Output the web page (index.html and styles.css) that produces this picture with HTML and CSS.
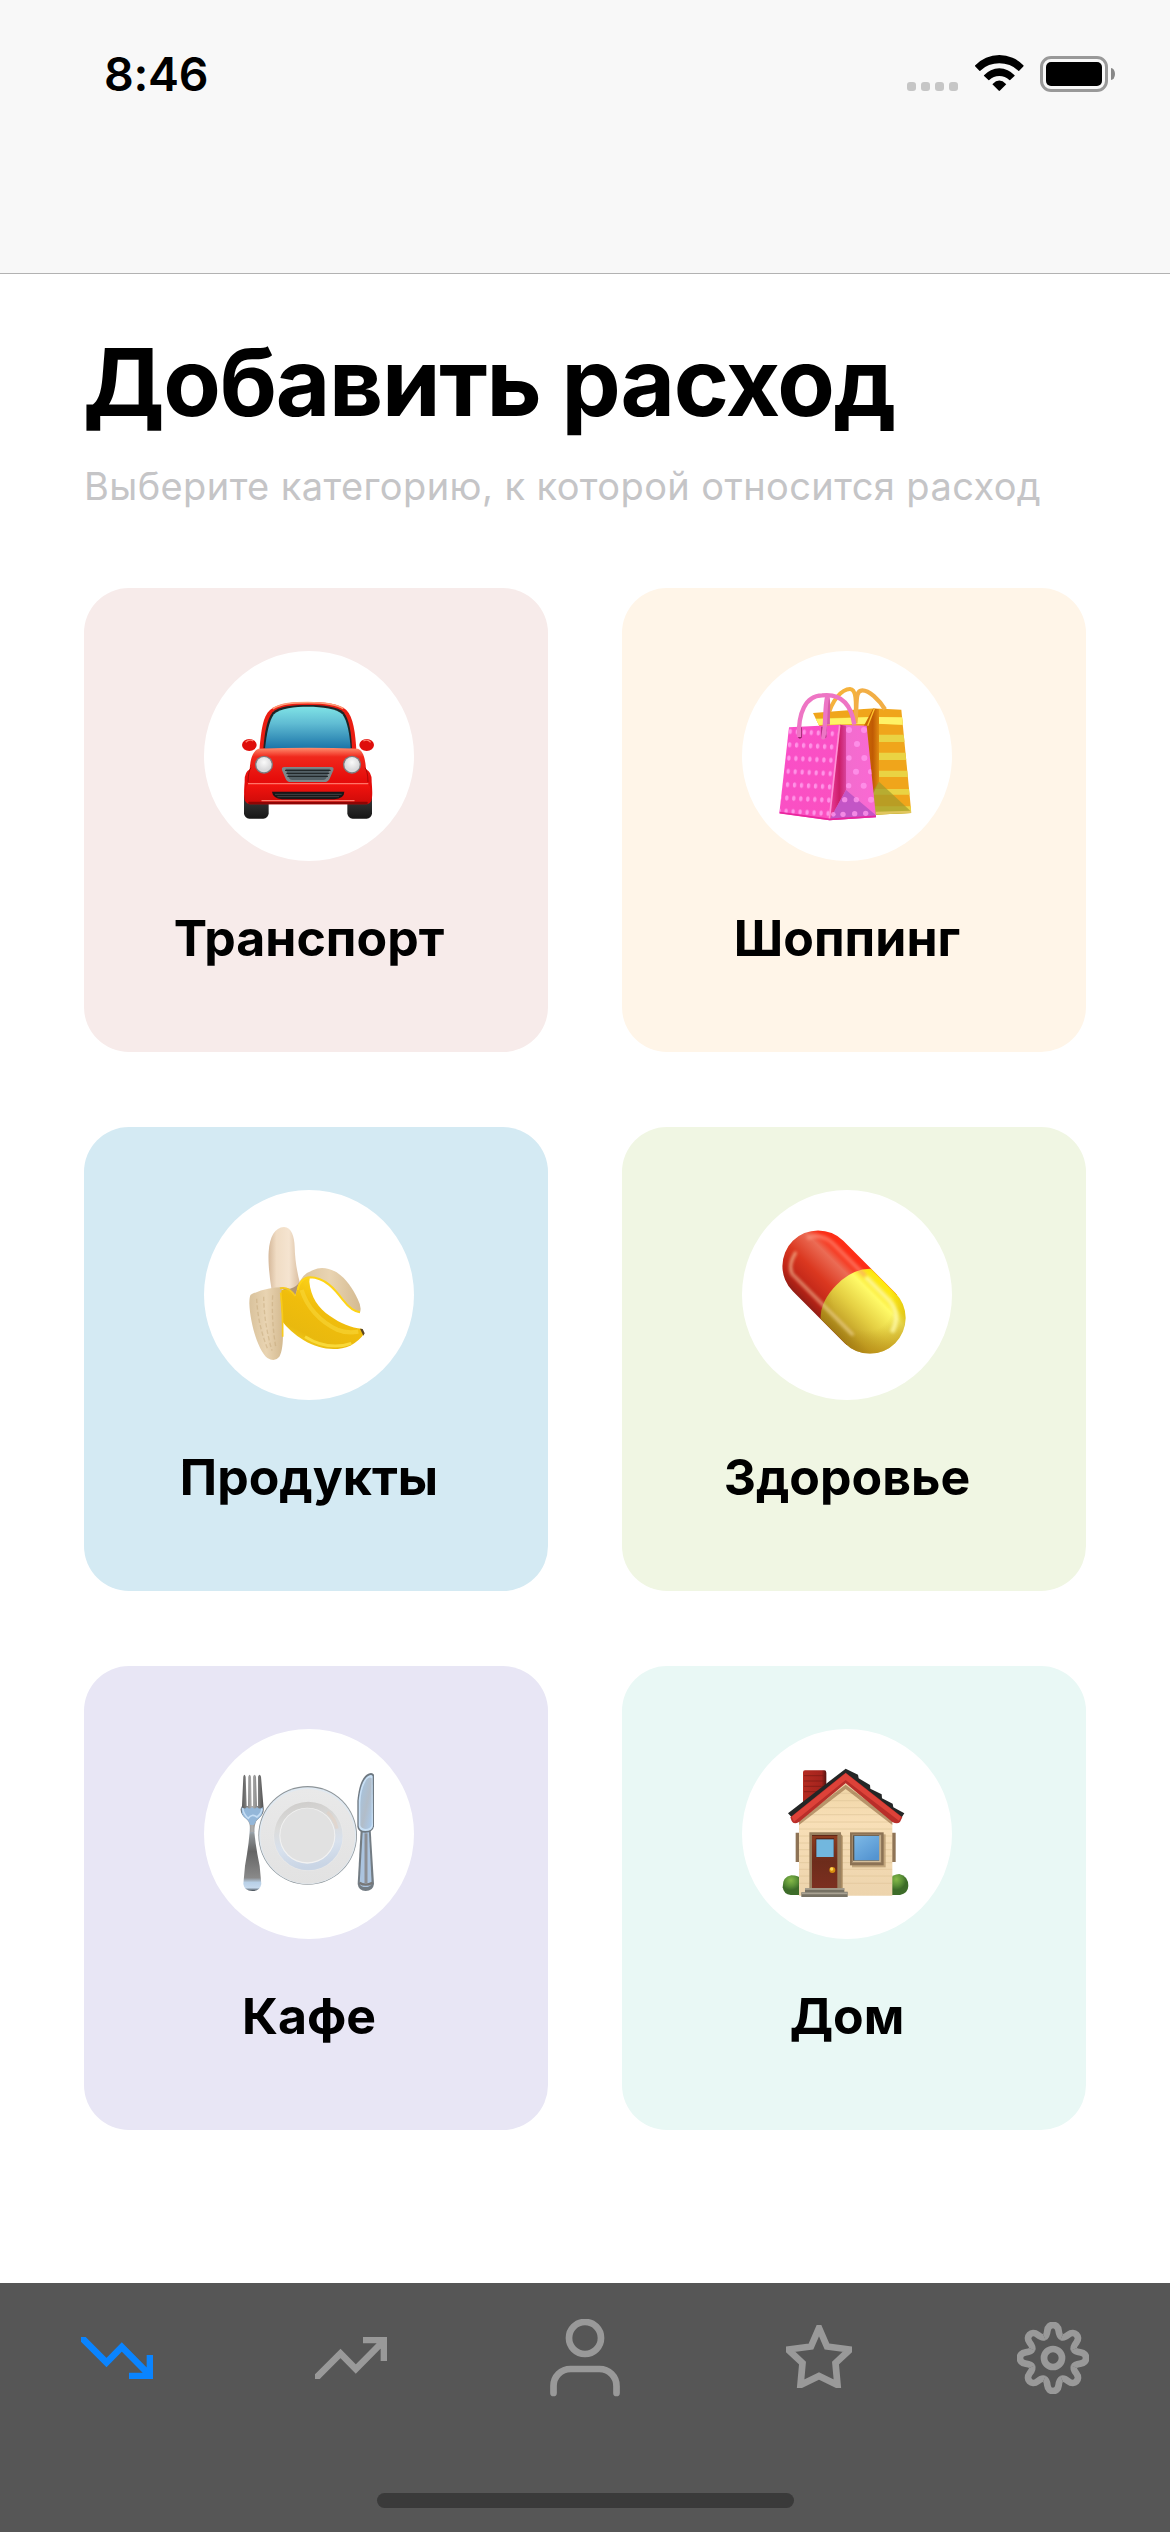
FILE: index.html
```html
<!DOCTYPE html>
<html lang="ru">
<head>
<meta charset="utf-8">
<meta name="viewport" content="width=device-width, initial-scale=1">
<title>Добавить расход</title>
<link rel="stylesheet" href="styles.css">
</head>
<body>
<div class="screen">
  <header class="navbar">
    <div class="status">
      <span class="clock">8:46</span>
      <div class="indicators">
        <div class="signal"><i></i><i></i><i></i><i></i></div>
        <svg class="wifi" viewBox="0 0 49 36">
          <path d="M0 10.6A33.4 33.4 0 0 1 48.6 10.6Q48.8 11 48.3 11.6L44.2 15.8Q43.8 16 43.3 15.7A27.7 27.7 0 0 0 5.3 15.7Q4.8 16 4.4 15.8L.3 11.6Q-.2 11 0 10.6Z"/>
          <path d="M9 20.2A20.5 20.5 0 0 1 39.6 20.2Q39.9 20.6 39.5 21L35.2 25.1Q34.8 25.4 34.3 25.1A14.5 14.5 0 0 0 14.3 25.1Q13.8 25.4 13.4 25.1L9.1 21Q8.7 20.6 9 20.2Z"/>
          <path d="M17.6 28.9Q24.3 22.2 31 28.9Q31.3 29.3 31 29.6L25 35.6Q24.3 36.3 23.6 35.6L17.6 29.6Q17.3 29.3 17.6 28.9Z"/>
        </svg>
        <div class="battery"><div class="battery-body"><div class="battery-level"></div></div><div class="battery-cap"></div></div>
      </div>
    </div>
  </header>

  <main class="content">
    <h1 class="title">Добавить расход</h1>
    <p class="subtitle">Выберите категорию, к которой относится расход</p>

    <div class="grid">
      <section class="card card-transport">
        <div class="badge">
          <svg viewBox="42 33 630 630">
            <defs>
              <linearGradient id="carGlass" x1="0" y1="0" x2="0" y2="1"><stop offset="0" stop-color="#7fe3e6"/><stop offset=".4" stop-color="#60bcd3"/><stop offset="1" stop-color="#1b74a8"/></linearGradient>
              <linearGradient id="carBody" x1="0" y1="0" x2="0" y2="1"><stop offset="0" stop-color="#ff8d6e"/><stop offset=".16" stop-color="#f0281c"/><stop offset=".55" stop-color="#e60d0b"/><stop offset="1" stop-color="#d90806"/></linearGradient>
              <linearGradient id="carTire" x1="0" y1="0" x2="0" y2="1"><stop offset="0" stop-color="#444"/><stop offset="1" stop-color="#161616"/></linearGradient>
              <linearGradient id="carBumper" x1="0" y1="0" x2="0" y2="1"><stop offset="0" stop-color="#f5140f"/><stop offset="1" stop-color="#cf0b09"/></linearGradient>
              <radialGradient id="carLamp" cx=".5" cy=".35"><stop offset="0" stop-color="#fafafa"/><stop offset="1" stop-color="#d9d9db"/></radialGradient>
            </defs>
            <rect x="162" y="455" width="74" height="81" rx="16" fill="url(#carTire)"/>
            <rect x="472" y="455" width="74" height="81" rx="16" fill="url(#carTire)"/>
            <path d="M208 330C214 270 218 230 240 210C262 190 310 186 354 186C398 186 448 190 469 210C490 230 496 280 499 330Z" fill="#ea1d12"/>
            <path d="M248 206C275 190 310 188 354 188C398 188 435 190 460 206" fill="none" stroke="#ff9b78" stroke-width="5"/>
            <path d="M220 325C224 280 230 238 248 217C266 198 310 195 354 195C398 195 444 199 461 217C478 238 484 280 486 325Z" fill="#1d2426"/>
            <path d="M225 326C230 282 237 243 252 223C270 204 315 200 354 200C396 200 442 206 457 223C472 243 479 282 482 326Z" fill="url(#carGlass)"/>
            <ellipse cx="178" cy="315" rx="22" ry="18" fill="#df0e0b"/><ellipse cx="530" cy="315" rx="22" ry="18" fill="#df0e0b"/>
            <path d="M167 307Q178 296 190 303M520 303Q532 296 542 307" fill="none" stroke="#ff7b69" stroke-width="4"/>
            <path d="M205 326Q354 321 504 326C522 334 526 360 528 388Q546 396 545 425C547 450 548 470 544 482Q540 493 524 493H186Q170 493 165 482C161 470 162 450 164 425Q163 396 179 388C181 360 187 334 205 326Z" fill="url(#carBody)"/>
            <path d="M183 383Q175 392 174 426M525 383Q533 392 534 426" fill="none" stroke="#a90805" stroke-width="3"/>
            <rect x="168" y="429" width="373" height="60" rx="18" fill="url(#carBumper)"/>
            <path d="M174 431H535" stroke="#ff7367" stroke-width="4"/>
            <path d="M178 489H530" stroke="#8f0504" stroke-width="7" stroke-linecap="round"/>
            <path d="M216 482H492" stroke="#ff7a6c" stroke-width="4" stroke-linecap="round"/>
            <path d="M246 455H463Q463 475 433 478H276Q248 474 246 455Z" fill="#171719"/><path d="M255 463H455M262 470H447" stroke="#444" stroke-width="3"/>
            <path d="M283 381H423Q433 381 430 391L419 416Q414 426 403 426H302Q291 426 287 416L276 391Q274 381 283 381Z" fill="#7e888b"/>
            <path d="M287 386H420L409 414Q406 420 400 420H307Q300 420 297 414Z" fill="#536066"/>
            <path d="M285 391H422M289 400H418M292 409H414" stroke="#171c1e" stroke-width="3"/>
            <circle cx="222" cy="374" r="27" fill="#7d7c80"/><circle cx="222" cy="374" r="23" fill="url(#carLamp)"/>
            <circle cx="486" cy="374" r="27" fill="#7d7c80"/><circle cx="486" cy="374" r="23" fill="url(#carLamp)"/>
          </svg>
        </div>
        <h2 class="label">Транспорт</h2>
      </section>

      <section class="card card-shopping">
        <div class="badge">
          <svg viewBox="36 33 630 630">
            <defs>
              <linearGradient id="bagFront" x1="0" y1="0" x2="1" y2="1"><stop offset="0" stop-color="#f94fc9"/><stop offset="1" stop-color="#fb50bf"/></linearGradient>
              <linearGradient id="bagFold" x1="0" y1="0" x2="1" y2="0"><stop offset="0" stop-color="#ef3da0"/><stop offset=".6" stop-color="#cb1e69"/><stop offset="1" stop-color="#d9439c"/></linearGradient>
              <linearGradient id="bagSide" x1="0" y1="0" x2="1" y2="0"><stop offset="0" stop-color="#e14cac"/><stop offset=".4" stop-color="#f26cce"/><stop offset="1" stop-color="#fb68d3"/></linearGradient>
              <linearGradient id="yellowFold" x1="0" y1="0" x2="1" y2="0"><stop offset="0" stop-color="#d16f00"/><stop offset=".6" stop-color="#c05a04"/><stop offset="1" stop-color="#e08a10"/></linearGradient>
              <clipPath id="yellowBag"><path d="M249 219L430 205L514 209L544 519L400 526Z"/></clipPath>
              <clipPath id="pinkBag"><path d="M177 262L330 254L298 541L148 520Z"/></clipPath>
              <clipPath id="pinkSide"><path d="M330 254L410 257L438 531L298 541Z"/></clipPath>
              <pattern id="dots" width="21" height="40" patternUnits="userSpaceOnUse" patternTransform="translate(172 254) skewY(3) skewX(-3)"><ellipse cx="10" cy="20" rx="5" ry="8" fill="#ff92e6"/></pattern>
            </defs>
            <path d="M292 235C305 180 336 147 360 147C378 147 380 180 376 250" fill="none" stroke="#f5b23c" stroke-width="12"/>
            <g clip-path="url(#yellowBag)">
              <path d="M240 200H550V535H240Z" fill="#f0a51b"/>
              <path d="M240 236L430 231L550 232V256L430 250L240 256ZM430 284H550V306H430ZM430 338H550V360H430ZM430 392H550V411H430ZM430 447H550V464H430ZM430 499H550V525H430Z" fill="#ead343"/>
              <path d="M240 238L425 231V251L240 255ZM445 231L550 233V256L440 251Z" fill="#fff266"/>
              <path d="M430 205L447 208V425L425 470L400 260Z" fill="url(#yellowFold)"/>
              <path d="M433 206L413 257" stroke="#ffc62d" stroke-width="4"/>
              <path d="M447 425L544 515L540 526H430V450Z" fill="#9f9a29" opacity=".68"/>
              <path d="M438 519L544 516" stroke="#e1c65d" stroke-width="7"/>
            </g>
            <path d="M376 250C382 190 374 151 397 151C417 151 447 178 465 208" fill="none" stroke="#f2ae45" stroke-width="13"/>
            <path d="M177 262L330 254L298 541L148 520Z" fill="url(#bagFront)"/>
            <path d="M330 254L410 257L438 531L298 541Z" fill="url(#bagSide)"/>
            <path d="M330 254L348 257V450L298 541Z" fill="url(#bagFold)"/>
            <path d="M348 450L438 526V532L298 541Z" fill="#c355c6"/>
            <path d="M172 254H330L296 545H145Z" fill="url(#dots)" clip-path="url(#pinkBag)"/>
            <g clip-path="url(#pinkSide)" fill="#ff97ed" opacity=".8"><circle cx="357" cy="270" r="9"/><circle cx="402" cy="270" r="9"/><circle cx="381" cy="312" r="9"/><circle cx="357" cy="354" r="8"/><circle cx="403" cy="354" r="9"/><circle cx="378" cy="395" r="9"/><circle cx="422" cy="395" r="8"/><circle cx="356" cy="437" r="8"/><circle cx="401" cy="437" r="9"/><circle cx="379" cy="479" r="8"/><circle cx="423" cy="479" r="9"/><circle cx="344" cy="479" r="8"/><circle cx="310" cy="523" r="7"/><circle cx="339" cy="523" r="8"/><circle cx="374" cy="521" r="8"/><circle cx="407" cy="520" r="8"/></g>
            <path d="M329 256L298 538" stroke="#ff91d5" stroke-width="5"/>
            <path d="M149 518L298 538L438 529" fill="none" stroke="#e9279e" stroke-width="5"/>
            <path d="M203 262H216V292Q209 301 203 290ZM274 260H289V292Q280 301 274 290Z" fill="#9c246e"/>
            <path d="M292 168C300 185 293 220 295 254" fill="none" stroke="#d75ba9" stroke-width="10"/>
            <path d="M207 291C204 220 226 167 276 166C330 160 363 190 373 254" fill="none" stroke="#ee75c4" stroke-width="13"/>
            <path d="M292 168C283 205 289 245 280 292" fill="none" stroke="#ed76c5" stroke-width="13" stroke-linecap="round"/>
          </svg>
        </div>
        <h2 class="label">Шоппинг</h2>
      </section>

      <section class="card card-food">
        <div class="badge">
          <svg viewBox="42 30 630 630">
            <defs>
              <linearGradient id="fruit" x1="0" y1="0" x2="1" y2="0"><stop offset="0" stop-color="#d6b99b"/><stop offset=".25" stop-color="#f0dcc4"/><stop offset=".65" stop-color="#f5e4d0"/><stop offset="1" stop-color="#d9bd9f"/></linearGradient>
              <linearGradient id="peelYellow" x1="0" y1="1" x2=".6" y2="0"><stop offset="0" stop-color="#ffe22e"/><stop offset=".3" stop-color="#e9b90e"/><stop offset=".6" stop-color="#f0bd0c"/><stop offset="1" stop-color="#ffd91d"/></linearGradient>
              <linearGradient id="peelInner" x1="0" y1="0" x2="1" y2="0"><stop offset="0" stop-color="#d9c29c"/><stop offset=".5" stop-color="#e9d4b2"/><stop offset="1" stop-color="#d4ba90"/></linearGradient>
            </defs>
            <path d="M245 330C238 290 234 245 236 215C239 170 255 142 282 141C305 142 313 170 314 200C315 240 321 275 330 310L316 350Z" fill="url(#fruit)"/>
            <path d="M268 322L300 340L315 348L328 306Q322 320 300 326Z" fill="#9a7c59" opacity=".7"/>
            <path d="M262 335Q295 318 316 348Q325 300 360 288L358 305C362 350 385 385 420 408C450 430 485 444 515 446L522 461Q510 480 481 497C440 514 390 510 340 480Q300 455 275 422Z" fill="url(#peelYellow)"/>
            <path d="M335 330C350 380 390 425 442 449Q470 461 505 455" fill="none" stroke="#f8d739" stroke-width="13" opacity=".6"/>
            <path d="M345 470C390 498 440 505 484 490" fill="none" stroke="#ffe64b" stroke-width="9" opacity=".7"/>
            <path d="M510 446L518 447L524 460L520 467Z" fill="#5c4521"/>
            <path d="M325 320Q330 284 370 270Q400 255 440 277C470 298 488 325 503 357Q516 382 510 397Q492 400 465 365C440 330 405 293 360 292Q335 292 325 320Z" fill="url(#peelInner)"/>
            <path d="M323 330Q330 294 360 292C405 293 434 327 458 359Q485 394 510 397" fill="none" stroke="#fed415" stroke-width="6"/>
            <path d="M182 344Q228 322 278 322Q268 345 276 400C280 450 282 505 268 530Q255 547 232 534C205 513 180 430 178 370Q178 350 182 344Z" fill="url(#peelInner)"/>
            <path d="M200 356Q203 430 232 505M221 350Q222 430 246 512M248 346Q244 425 258 505" stroke="#bd9f71" stroke-width="4" stroke-dasharray="13 7" fill="none" opacity=".4"/>
            <path d="M270 325Q294 318 316 348M272 338Q279 400 278 470" fill="none" stroke="#f8cb1c" stroke-width="5"/>
          </svg>
        </div>
        <h2 class="label">Продукты</h2>
      </section>

      <section class="card card-health">
        <div class="badge">
          <svg viewBox="36 30 630 630">
            <defs>
              <linearGradient id="pillRed" x1="0" y1="0" x2="0" y2="1"><stop offset="0" stop-color="#ff2e17"/><stop offset=".16" stop-color="#f92e16"/><stop offset=".3" stop-color="#eb6c55"/><stop offset=".58" stop-color="#db3820"/><stop offset=".85" stop-color="#bd2417"/><stop offset="1" stop-color="#8e1d15"/></linearGradient>
              <linearGradient id="pillYellow" x1="0" y1="0" x2="0" y2="1"><stop offset="0" stop-color="#ffe90c"/><stop offset=".13" stop-color="#fae71d"/><stop offset=".24" stop-color="#fffa67"/><stop offset=".55" stop-color="#e5d043"/><stop offset=".82" stop-color="#c5a429"/><stop offset="1" stop-color="#927017"/></linearGradient>
              <radialGradient id="pillShade" cx=".35" cy=".4" r=".7"><stop offset=".55" stop-color="#b08a10" stop-opacity="0"/><stop offset="1" stop-color="#b98a12" stop-opacity=".65"/></radialGradient>
              <clipPath id="pillOutline"><rect x="-217" y="-107" width="434" height="214" rx="107"/></clipPath>
              <filter id="gloss" x="-30%" y="-60%" width="160%" height="220%"><feGaussianBlur stdDeviation="4"/></filter>
            </defs>
            <g transform="translate(342 336) rotate(45)">
              <g clip-path="url(#pillOutline)">
                <path d="M-220 -110H120V110H-220Z" fill="url(#pillRed)"/>
                <path d="M8 -107Q-31 -70 -31 0Q-31 70 8 107H220V-107Z" fill="url(#pillYellow)"/>
                <path d="M8 -107Q-31 -70 -31 0Q-31 70 8 107H220V-107Z" fill="url(#pillShade)"/>
                <path d="M-192 -35Q-178 -77 -125 -79H12" fill="none" stroke="#ff9c87" stroke-width="13" opacity=".55" filter="url(#gloss)"/>
                <path d="M14 -78H112Q170 -75 187 -16" fill="none" stroke="#fff9a9" stroke-width="13" opacity=".8" filter="url(#gloss)"/>
                <path d="M-186 20Q-176 62 -150 71L108 72" fill="none" stroke="#ffe5b8" stroke-width="9" opacity=".6" filter="url(#gloss)" stroke-linecap="round"/>
              </g>
            </g>
          </svg>
        </div>
        <h2 class="label">Здоровье</h2>
      </section>

      <section class="card card-cafe">
        <div class="badge">
          <svg viewBox="42 27 630 630">
            <defs>
              <linearGradient id="handle" x1="0" y1="0" x2="0" y2="1"><stop offset="0" stop-color="#b8d5ef"/><stop offset=".15" stop-color="#8f9497"/><stop offset=".4" stop-color="#656565"/><stop offset=".8" stop-color="#898989"/><stop offset=".87" stop-color="#b8d0e7"/><stop offset=".95" stop-color="#c5d9ed"/><stop offset="1" stop-color="#3f464d"/></linearGradient>
              <linearGradient id="tine" x1="0" y1="0" x2="1" y2="0"><stop offset="0" stop-color="#4f4f4f"/><stop offset=".5" stop-color="#b0b0b0"/><stop offset="1" stop-color="#505050"/></linearGradient>
              <linearGradient id="blade" x1="0" y1="0" x2="1" y2="1"><stop offset="0" stop-color="#a4c5e3"/><stop offset=".55" stop-color="#b2bdc9"/><stop offset="1" stop-color="#aacbed"/></linearGradient>
              <linearGradient id="plate" x1="0" y1="0" x2="0" y2="1"><stop offset="0" stop-color="#e9e9e9"/><stop offset="1" stop-color="#e2e2e2"/></linearGradient>
              <linearGradient id="well" x1="0" y1="0" x2=".15" y2="1"><stop offset="0" stop-color="#cdcbc9"/><stop offset=".4" stop-color="#dcdcdb"/><stop offset=".7" stop-color="#d8e1ed"/><stop offset="1" stop-color="#c9d5e5"/></linearGradient>
            </defs>
            <circle cx="353" cy="346" r="148" fill="#8d9498"/><circle cx="353" cy="347" r="145.500" fill="#e0e9f1"/><circle cx="353" cy="349" r="142" fill="url(#plate)"/>
            <circle cx="355" cy="348" r="105" fill="#e9e9e9"/><circle cx="355" cy="348" r="103" fill="url(#well)"/><circle cx="352" cy="347" r="84" fill="#f2f2f2"/><circle cx="352" cy="346" r="81" fill="#e1e1e1"/>
            <path d="M412 276Q434 296 441 326" fill="none" stroke="#e6cfbc" stroke-width="10" opacity=".45"/>
            <path d="M180 315H192Q193 360 209 438L214 492Q210 513 187 513Q163 513 160 492L165 438Q179 360 180 315Z" fill="url(#handle)"/>
            <path d="M156 258L160 170Q163 158 167 170L170 258H174L175 170Q179 158 183 170L185 258H189V170Q194 158 198 170L201 258H204V170Q209 158 213 170L221 267C222 289 199 296 197 308C193 319 193 334 193 336H180C180 322 180 312 175 304C169 293 152 288 152 267Z" fill="url(#tine)"/>
            <path d="M155 261Q164 270 171 261Q179 270 186 261Q194 270 201 261Q209 270 218 261Q222 286 200 300L192 315H181Q177 302 163 292Q152 282 155 261Z" fill="#94b7d9"/>
            <path d="M158 264Q160 283 175 295Q185 280 201 291Q215 281 216 266" fill="none" stroke="#c5ddf4" stroke-width="5"/>
            <path d="M512 330H542L552 492Q549 513 527 513Q506 513 503 492Z" fill="#737c83"/>
            <path d="M518 337H537L545 491Q540 501 527 501Q512 501 509 491Z" fill="#abc4df"/><path d="M528 340V490" stroke="#8c8f94" stroke-width="9"/><path d="M508 488Q527 500 547 488" stroke="#777" stroke-width="7" fill="none"/>
            <path d="M552 164Q547 156 535 161C513 172 506 207 502 242V320Q504 337 526 338Q549 337 552 319Z" fill="#6e7881"/>
            <path d="M548 169Q545 162 536 167C517 178 510 208 506 242V318Q508 333 526 333Q547 333 549 318Z" fill="#c8e0f6"/>
            <path d="M545 175Q534 166 524 189Q512 213 511 250V316Q513 326 526 327Q541 327 545 316Z" fill="url(#blade)"/>
          </svg>
        </div>
        <h2 class="label">Кафе</h2>
      </section>

      <section class="card card-home">
        <div class="badge">
          <svg viewBox="36 27 630 630">
            <defs>
              <linearGradient id="wall" x1="0" y1="0" x2="0" y2="1"><stop offset="0" stop-color="#efd5a5"/><stop offset=".35" stop-color="#f8dfb7"/><stop offset="1" stop-color="#edd4ad"/></linearGradient>
              <linearGradient id="brick" x1="0" y1="0" x2="1" y2="0"><stop offset="0" stop-color="#b52b21"/><stop offset=".8" stop-color="#a4231d"/><stop offset="1" stop-color="#521310"/></linearGradient>
              <linearGradient id="glass" x1="0" y1="0" x2=".7" y2="1"><stop offset="0" stop-color="#7db9e6"/><stop offset="1" stop-color="#5494d1"/></linearGradient>
              <linearGradient id="door" x1="0" y1="0" x2="0" y2="1"><stop offset="0" stop-color="#8c3d21"/><stop offset=".5" stop-color="#6d2c1b"/><stop offset="1" stop-color="#7c2f20"/></linearGradient>
              <radialGradient id="bush" cx=".4" cy=".25"><stop offset="0" stop-color="#86b948"/><stop offset=".6" stop-color="#5b9137"/><stop offset="1" stop-color="#3d6c29"/></radialGradient>
              <clipPath id="front"><path d="M207 527V300L347 190L487 300V527Z"/></clipPath>
            </defs>
            <path d="M158 502Q157 470 184 466Q207 466 220 482V525H182Q161 523 158 502Z" fill="url(#bush)"/>
            <path d="M535 498Q535 468 508 462Q489 462 475 480V525H510Q534 520 535 498Z" fill="url(#bush)"/>
            <path d="M197 338H207V426H197ZM486 338H497V426H486Z" fill="#8e7355"/>
            <path d="M219 245V157Q219 151 225 151H283Q289 151 289 158V220L220 265Z" fill="url(#brick)"/>
            <path d="M222 167H286M222 183H286M222 199H286M222 215H286" stroke="#771914" stroke-width="2"/>
            <path d="M207 527V300L347 190L487 300V527Z" fill="url(#wall)"/>
            <g clip-path="url(#front)" stroke="#dfc699" stroke-width="2"><path d="M200 220H500M200 242H500M200 263H500M200 284H500M200 306H500M200 327H500M200 348H500M200 369H500M200 389H500M200 408H500M200 428H500M200 448H500M200 468H500M200 490H500"/></g>
            <path d="M207 300L347 194L487 300V315L347 207L207 315Z" fill="#865d35" opacity=".55"/>
            <path d="M174 280L347 146L384 164L386 175L420 195L421 206L455 223L456 235L488 251L490 262L523 280L514 294L347 176L188 295Z" fill="#242626"/>
            <path d="M181 292L347 158L517 292L510 306Q502 314 487 306L347 190L207 306Q191 315 185 303Z" fill="#b92e29"/>
            <path d="M185 290L347 160L513 290L507 302L347 180L192 305Z" fill="#dd4239"/>
            <path d="M238 505V337H333V505Z" fill="#99805f"/><path d="M333 343L338 348V505H333Z" fill="#a88a61"/><path d="M246 505V345H322V505Z" fill="url(#door)"/>
            <path d="M246 347H322V355H257V411H312V355H322V345H246Z" fill="#512014"/>
            <rect x="259" y="358" width="52" height="53" fill="#72b7de"/><circle cx="307" cy="450" r="9" fill="#d68c0e"/><circle cx="305" cy="447" r="5" fill="#ffd358"/>
            <path d="M225 505H343V515H353V531H214V517H225Z" fill="#777264"/><path d="M225 507H343M215 520H352" stroke="#aaa393" stroke-width="5"/>
            <rect x="366" y="343" width="101" height="99" fill="#b69a70" opacity=".8"/><rect x="360" y="337" width="101" height="99" fill="#8c7254"/><rect x="366" y="343" width="88" height="86" fill="#a0876a"/><rect x="369" y="346" width="80" height="78" fill="#5d5548"/><rect x="373" y="348" width="75" height="73" fill="url(#glass)"/><path d="M369 424H450V346" fill="none" stroke="#d5bf9a" stroke-width="4"/>
          </svg>
        </div>
        <h2 class="label">Дом</h2>
      </section>
    </div>
  </main>

  <nav class="tabbar">
    <div class="tabs">
      <a class="tab tab-active"><svg width="72" height="42" viewBox="0 0 72 42"><path d="M-2 -2L25.5 25.5L40.8 10L69 38.5M69 18V39H48"/></svg></a>
      <a class="tab"><svg width="72" height="42" viewBox="0 0 72 42"><path d="M-2 44L25.5 16.5L40.8 32L69 3.5M69 24V3H48"/></svg></a>
      <a class="tab"><svg width="72" height="78" viewBox="0 0 72 78"><circle cx="36" cy="19" r="16"/><path stroke-linecap="round" d="M4.5 74V67A17 17 0 0 1 21.5 50H50.5A17 17 0 0 1 67.5 67V74"/></svg></a>
      <a class="tab tab-star"><svg width="66" height="63" viewBox="0 0 66 63"><path d="M33 3L41 21.5L64 24.5L49.5 38L51.5 60L33 51L14.500 60L16.5 38L2 24.5L25 21.5Z"/></svg></a>
      <a class="tab"><svg width="72" height="72" viewBox="-36 -36 72 72">
        <defs><path id="tooth" d="M-8.7 -20.9C-6.6 -21.7 -6 -24 -5.6 -27.5C-4.8 -35 4.8 -35 5.6 -27.5C6 -24 6.6 -21.7 8.7 -20.9"/></defs>
        <use href="#tooth"/><use href="#tooth" transform="rotate(45)"/><use href="#tooth" transform="rotate(90)"/><use href="#tooth" transform="rotate(135)"/><use href="#tooth" transform="rotate(180)"/><use href="#tooth" transform="rotate(225)"/><use href="#tooth" transform="rotate(270)"/><use href="#tooth" transform="rotate(315)"/>
        <circle r="9"/></svg></a>
    </div>
    <div class="home-indicator"></div>
  </nav>
</div>
</body>
</html>
```
FILE: styles.css
```css
* { box-sizing: border-box; }

body {
  margin: 0;
  background: #fff;
  color: #000;
  font-family: Inter, "Liberation Sans", sans-serif;
}

.screen {
  width: 1170px;
  height: 2532px;
  display: flex;
  flex-direction: column;
  overflow: hidden;
}

.navbar {
  height: 274px;
  background: #f8f8f8;
  border-bottom: 1px solid #b2b2b2;
}

.status {
  height: 148px;
  padding: 0 55px 0 104px;
  display: flex;
  align-items: center;
  justify-content: space-between;
}

.clock {
  font-size: 46.5px;
  font-weight: 600;
  letter-spacing: -0.3px;
  line-height: 56px;
}

.indicators {
  height: 36px;
  display: flex;
  align-items: flex-end;
}

.signal {
  display: flex;
  gap: 5px;
  margin: 0 17px 1px 0;
}

.signal i {
  width: 9px;
  height: 9px;
  border-radius: 3px;
  background: #c6c6c6;
}

.wifi {
  width: 49px;
  height: 36px;
  margin: 0 16px 1px 0;
}

.battery {
  display: flex;
  align-items: center;
  gap: 3px;
}

.battery-body {
  width: 68px;
  height: 36px;
  padding: 3px;
  border: 3px solid #999;
  border-radius: 11px;
}

.battery-level {
  height: 24px;
  border-radius: 5px;
  background: #000;
}

.battery-cap {
  width: 4px;
  height: 12px;
  border-radius: 0 4px 4px 0 / 0 6px 6px 0;
  background: #888;
}

.content {
  flex: 1;
  padding: 51px 84px 0;
}

.title {
  margin: 0 0 0 -1px;
  font-size: 94px;
  line-height: 114px;
  font-weight: 700;
  letter-spacing: -1.3px;
  white-space: nowrap;
}

.subtitle {
  margin: 24px 0 79px;
  font-size: 38px;
  line-height: 46px;
  font-weight: 400;
  letter-spacing: 0.4px;
  color: #c5c5c7;
  white-space: nowrap;
}

.grid {
  display: grid;
  grid-template-columns: 464px 464px;
  grid-auto-rows: 464px;
  gap: 75px 74px;
}

.card {
  padding: 63px 14px 0 0;
  border-radius: 45px;
  display: flex;
  flex-direction: column;
  align-items: center;
}

.card-transport { background: #f7ebea; }
.card-shopping { background: #fff5e8; }
.card-food { background: #d4eaf3; }
.card-health { background: #f0f6e3; }
.card-cafe { background: #e8e6f5; }
.card-home { background: #e9f8f5; }

.badge {
  width: 210px;
  height: 210px;
  border-radius: 50%;
  background: #fff;
}

.badge svg {
  display: block;
  width: 210px;
  height: 210px;
}

.label {
  margin: 47px 0 0;
  font-size: 50px;
  line-height: 61px;
  font-weight: 700;
}

.tabbar {
  height: 249px;
  background: #565656;
  display: flex;
  flex-direction: column;
  align-items: center;
}

.tabs {
  width: 100%;
  height: 150px;
  display: grid;
  grid-template-columns: repeat(5, 1fr);
}

.tab {
  display: flex;
  align-items: center;
  justify-content: center;
  color: #999;
}

.tab-active { color: #0a84ff; }
.tab-star { padding-bottom: 3px; }

.tab svg {
  display: block;
  fill: none;
  stroke: currentColor;
  stroke-width: 6.7px;
}

.home-indicator {
  width: 417px;
  height: 15px;
  margin-top: 60px;
  border-radius: 8px;
  background: #3a3a3a;
}
```
